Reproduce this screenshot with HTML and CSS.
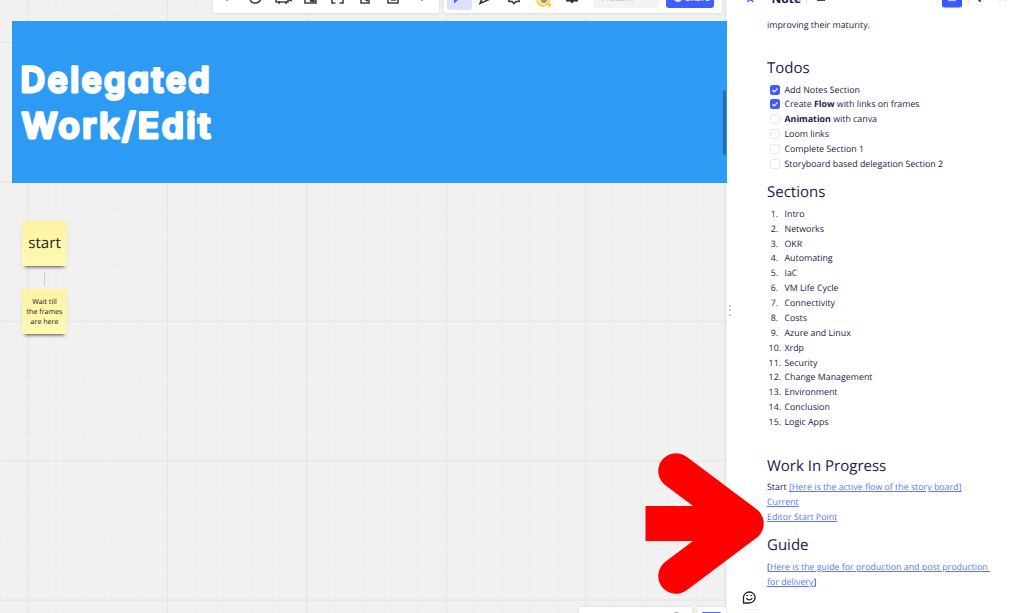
FILE: index.html
```html
<!DOCTYPE html>
<html lang="en">
<head>
<meta charset="utf-8">
<title>Board</title>
<link rel="stylesheet" href="styles.css">
</head>
<body>
<div class="app">
  <main class="canvas">
    <section class="banner">
      <svg class="title" width="220" height="110" viewBox="0 0 220 110">
        <text x="8.500" y="37.500" textLength="191.500" lengthAdjust="spacingAndGlyphs">Delegated</text>
        <text x="9.500" y="83.500" textLength="191.500" lengthAdjust="spacingAndGlyphs">Work/Edit</text>
      </svg>
    </section>
    <div class="stickies">
      <div class="sticky big">start</div>
      <div class="connector"></div>
      <div class="sticky small">Wait till<br>the frames<br>are here</div>
    </div>
    <div class="bar tools">
      <svg width="225" height="13" viewBox="0 0 225 13" fill="none" stroke="#444" stroke-width="1.6">
        <path d="M13 0h2M208 0h2" stroke-width="1.2"/>
        <path d="M37-1c1 5.500 10 5.500 11-1M63-1v3h12V-1M66 1v3M73 1v3M76 0l3 1M92-1v4h11v-4M119-1v4h3.500M130-1v4h-3.500M148-1v4h8v-4M175-1v4h10v-4M178 0h5"/>
        <path d="M97-1h4v2.500h-3zM151-1l4 2" fill="#333"/>
      </svg>
    </div>
    <div class="bar collab">
      <div class="selected"></div>
      <svg class="collab-icons" width="140" height="13" viewBox="0 0 140 13" fill="none">
        <path d="M10-1v4.500L14 0h4v-1z" fill="#4262ff"/>
        <path d="M38-1l-2 4.500 10-4.500M65-1v2.500h3l2 2 2-2h3v-2.500" stroke="#333" stroke-width="1.600"/>
        <circle cx="99" cy="0" r="6" fill="#f5e4b5" stroke="#fc3" stroke-width="1.500"/>
        <circle cx="100" cy="0" r="3" fill="#a98a78"/>
        <path d="M107 0l-5 5h3l-1 4 4-5h-3z" fill="#fc3"/>
        <path d="M122-1v2.500h4l2 2 2-2h4v-2.500z" fill="#333"/>
      </svg>
      <div class="present"><span>Present</span></div>
      <div class="share"><i></i><span>Share</span></div>
    </div>
    <div class="scrollbar"></div>
    <div class="bar zoombar"><i></i></div>
    <div class="bar mapbar"><i></i></div>
  </main>
  <aside class="panel">
    <header class="head">
      <svg width="296" height="10" viewBox="0 0 296 10" fill="none">
        <path d="M20.500 2l2-3M23-1l3.500 3M22 0h3" stroke="#4262ff" stroke-width="1.400"/>
        <path d="M79.500 0v3M241.500 0v3" stroke="#dcdce4"/>
        <path d="M90 0h8" stroke="#444" stroke-width="2"/>
        <path d="M215-3h20v8a2.500 2.500 0 0 1-2.500 2.500h-15a2.500 2.500 0 0 1-2.500-2.500z" fill="#3859ff"/>
        <path d="M221 .5h8" stroke="#bdc8ff" stroke-width="1.400"/>
        <path d="M251 0h2v2" stroke="#333" stroke-width="1.500"/>
        <path d="M272 .3h2M277 .3h2" stroke="#ddd"/>
      </svg>
      <span class="head-title">Note</span>
    </header>
    <article class="note">
      <p class="line intro">improving their maturity.</p>
      <h2 class="h-todos">Todos</h2>
      <ul class="todos">
        <li><i class="box on"><svg viewBox="0 0 10 10"><path d="M2.500 5.200l1.800 1.600 3.300-3.500"/></svg></i>Add Notes Section</li>
        <li><i class="box on"><svg viewBox="0 0 10 10"><path d="M2.500 5.200l1.800 1.600 3.300-3.500"/></svg></i>Create <b>Flow</b> with links on frames</li>
        <li><i class="box"></i><b>Animation</b> with canva</li>
        <li><i class="box"></i>Loom links</li>
        <li><i class="box"></i>Complete Section 1</li>
        <li><i class="box"></i>Storyboard based delegation Section 2</li>
      </ul>
      <h2 class="h-sections">Sections</h2>
      <ul class="sections">
        <li><i>1.</i>Intro</li><li><i>2.</i>Networks</li><li><i>3.</i>OKR</li>
        <li><i>4.</i>Automating</li><li><i>5.</i>IaC</li><li><i>6.</i>VM Life Cycle</li>
        <li><i>7.</i>Connectivity</li><li><i>8.</i>Costs</li><li><i>9.</i>Azure and Linux</li>
        <li><i class="wide">10.</i>Xrdp</li><li><i class="wide">11.</i>Security</li><li><i class="wide">12.</i>Change Management</li>
        <li><i class="wide">13.</i>Environment</li><li><i class="wide">14.</i>Conclusion</li><li><i class="wide">15.</i>Logic Apps</li>
      </ul>
      <h2 class="h-work">Work In Progress</h2>
      <p class="line">Start <a>[Here is the active flow of the story board]</a></p>
      <p class="line"><a>Current</a></p>
      <p class="line"><a>Editor Start Point</a></p>
      <h2 class="h-guide">Guide</h2>
      <p class="line">[<a>Here is the guide for production and post production&nbsp;</a></p>
      <p class="line"><a>for delivery</a>]</p>
    </article>
    <div class="grip"><i></i><i></i><i></i></div>
    <svg class="smiley" width="20" height="22" viewBox="0 0 20 22" fill="none" stroke="#222" stroke-width="1.300" stroke-linecap="round">
      <path d="M2.500 14V8.500A5.800 5.500 0 1 1 8.300 14z" stroke-linejoin="round"/>
      <path d="M5.500 9.300c1 2.200 4.500 2.200 5.500 0M5.800 6.500h1M9.800 6.500h1" stroke-width="1.200"/>
      <path d="M0 20.500h18" stroke="#f5f5f5" stroke-width="1"/>
    </svg>
  </aside>
  <svg class="arrow" width="121" height="145" viewBox="645 451 121 145">
    <path d="M676 471L746 523.500 676 576" fill="none" stroke="red" stroke-width="35.500" stroke-linecap="round" stroke-linejoin="round"/>
    <path d="M645.500 506H740v35H645.500z" fill="red"/>
  </svg>
</div>
</body>
</html>
```
FILE: styles.css
```css
* { box-sizing: border-box; }
body { margin: 0; font-family: "Open Sans", "Noto Sans", sans-serif; overflow: hidden; text-rendering: geometricPrecision; }
h2, p, ul { margin: 0; padding: 0; }
i { font-style: normal; }
.app { display: flex; width: 1023px; height: 613px; position: relative; overflow: hidden; }

.canvas {
  position: relative;
  width: 727px;
  height: 613px;
  padding: 20.500px 0 0 12px;
  overflow: hidden;
  background-color: #f1f1f1;
  background-image:
    linear-gradient(90deg, #e4e4e4 1px, transparent 1px),
    linear-gradient(#e4e4e4 1px, transparent 1px),
    linear-gradient(90deg, #ededed 1px, transparent 1px),
    linear-gradient(#ededed 1px, transparent 1px);
  background-size: 139.4px 139.4px, 139.4px 139.4px, 27.88px 27.88px, 27.88px 27.88px;
  background-position: 27.600px 0, 0 42px, 27.600px 0, 0 42px;
}
.banner { height: 162px; background: #2d9bf3; padding-top: 33px; }
.title { display: block; overflow: visible; }
.title text {
  font-family: Inter, sans-serif;
  font-size: 35px;
  font-weight: 600;
  letter-spacing: 2.500px;
  font-feature-settings: "cv11";
  fill: #fff;
  stroke: #fff;
  stroke-width: 2.800px;
  stroke-linejoin: round;
}
.stickies { width: 45px; margin: 38px 0 0 10px; display: flex; flex-direction: column; align-items: center; }
.sticky {
  width: 45px;
  height: 45px;
  display: flex;
  align-items: center;
  justify-content: center;
  text-align: center;
  color: #222;
  background: linear-gradient(#fdf3a2, #fff9b0);
  box-shadow: 0 4px 3px -3px rgba(0, 0, 0, .6), 0 3px 4px -1px rgba(0, 0, 0, .1);
}
.big { font-size: 15.200px; }
.small { font-size: 7.100px; line-height: 10px; padding-top: 1px; }
.connector { width: 1px; height: 14px; margin: 6px 0 3.500px; background: #ccc; }

.bar { position: absolute; background: #fff; box-shadow: 0 0 3px rgba(0, 0, 0, .12); overflow: hidden; }
.bar svg { display: block; }
.tools { left: 213px; top: -10px; width: 225.500px; height: 22.500px; padding-top: 10px; border-radius: 3px; }
.collab { left: 444px; top: -10px; width: 277.500px; height: 22.500px; border-radius: 3px; }
.selected { position: absolute; left: 3px; top: 0; width: 25px; height: 19.500px; border-radius: 3px; background: #dce1fd; }
.collab-icons { position: absolute; left: 0; top: 10px; }
.present { position: absolute; left: 149px; top: 0; width: 65px; height: 17.500px; border-radius: 3px; background: linear-gradient(90deg, #f3f3f5 44px, #fafafb 44px 45px, #f3f3f5 45px); font-size: 9px; line-height: 12px; color: #b9b9c0; padding: 2px 0 0 8px; }
.share { position: absolute; left: 221.500px; top: 0; width: 48.500px; height: 17.500px; border-radius: 3px; background: #3f5fff; color: #dfe5ff; font-size: 8.500px; line-height: 12px; font-weight: 700; padding: 2.500px 0 0 20px; }
.share i { position: absolute; left: 8px; top: 4px; width: 8px; height: 8px; border-radius: 50%; background: #dfe5ff; }
.scrollbar { position: absolute; left: 723px; top: 90px; width: 3px; height: 65px; border-radius: 2px; background: #246da9; }
.zoombar { left: 579px; top: 607px; width: 113px; height: 12px; border-radius: 2px; }
.zoombar i { position: absolute; left: 94px; top: 5px; width: 7px; height: 7px; border-radius: 50%; background: #aaa; }
.mapbar { left: 697px; top: 607px; width: 29px; height: 12px; border-radius: 2px; }
.mapbar i { position: absolute; left: 5px; top: 5px; width: 19px; height: 4px; border-radius: 1px; background: #5068f0; }

.panel { position: relative; flex: 1; height: 613px; background: #fff; color: #1d174b; }
.head { position: relative; height: 10px; overflow: hidden; }
.head svg { display: block; }
.head-title { position: absolute; left: 44.500px; top: -10.500px; font-size: 12px; line-height: 17px; font-weight: 700; }
.note { padding-left: 40px; font-size: 8.830px; white-space: nowrap; }
.line { height: 14.900px; line-height: 14.900px; }
.intro { margin-top: 7.600px; }
h2 { font-size: 15px; font-weight: 400; height: 20px; line-height: 20px; }
.h-todos { margin-top: 25.400px; }
ul { list-style: none; }
li { display: flex; align-items: center; height: 14.880px; white-space: pre; }
.todos { margin-top: 4.200px; }
.box { width: 10px; height: 10px; margin: 0 5px 0 2.500px; border: 1px solid #e5e5ec; border-radius: 2.500px; flex: none; }
.box.on { background: #3d5cff; border: 0; }
.box svg { display: block; fill: none; stroke: #fff; stroke-width: 1.200; }
.h-sections { margin-top: 10.500px; }
.sections { margin-top: 4.600px; }
.sections i { width: 11px; text-align: right; margin-right: 6.500px; }
.sections .wide { width: 14px; margin-right: 3.500px; }
.h-work { margin-top: 26px; }
a { color: #5876ff; text-decoration: underline; text-underline-offset: 1px; text-decoration-thickness: 1px; }
.h-work + .line { margin-top: 4.700px; }
.h-guide { margin-top: 10.600px; }
.h-guide + .line { margin-top: 4.600px; }
.grip { position: absolute; left: 2px; top: 304.500px; display: flex; flex-direction: column; gap: 2.500px; }
.grip i { width: 2px; height: 2px; border-radius: 50%; background: #b5b5bc; }
.smiley { position: absolute; left: 14px; top: 589px; }
.arrow { position: absolute; left: 645px; top: 451px; }
```
